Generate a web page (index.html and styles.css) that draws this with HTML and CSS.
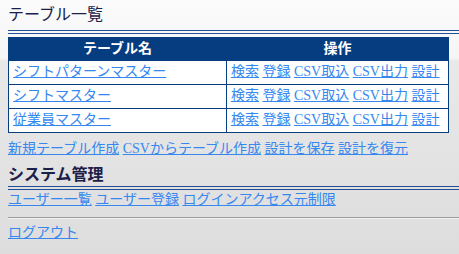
FILE: index.html
```html
<!DOCTYPE html>
<html lang="ja">
<head>
<meta charset="utf-8">
<title>テーブル一覧</title>
<link rel="stylesheet" href="styles.css">
</head>
<body>
<h2 class="title">テーブル一覧</h2>
<table class="tables">
  <thead>
    <tr><th class="col-name">テーブル名</th><th class="col-ops">操作</th></tr>
  </thead>
  <tbody>
    <tr>
      <td><a href="#">シフトパターンマスター</a></td>
      <td><a href="#">検索</a> <a href="#">登録</a> <a href="#">CSV取込</a> <a href="#">CSV出力</a> <a href="#">設計</a></td>
    </tr>
    <tr>
      <td><a href="#">シフトマスター</a></td>
      <td><a href="#">検索</a> <a href="#">登録</a> <a href="#">CSV取込</a> <a href="#">CSV出力</a> <a href="#">設計</a></td>
    </tr>
    <tr>
      <td><a href="#">従業員マスター</a></td>
      <td><a href="#">検索</a> <a href="#">登録</a> <a href="#">CSV取込</a> <a href="#">CSV出力</a> <a href="#">設計</a></td>
    </tr>
  </tbody>
</table>
<div class="links first-links"><a href="#">新規テーブル作成</a> <a href="#">CSVからテーブル作成</a> <a href="#">設計を保存</a> <a href="#">設計を復元</a></div>
<h3 class="title sub">システム管理</h3>
<div class="links"><a href="#">ユーザー一覧</a> <a href="#">ユーザー登録</a> <a href="#">ログインアクセス元制限</a></div>
<hr class="sep">
<div class="links"><a href="#">ログアウト</a></div>
</body>
</html>
```
FILE: styles.css
```css
html {
  min-height: 100%;
  background: linear-gradient(to bottom, #fbfbfb 0px, #f5f5f5 58px, #e9e9e9 61px, #dddddd 254px);
}
body {
  margin: 4px 0 0 8px;
  font-family: "Liberation Serif", "Noto Sans CJK JP", serif;
  font-size: 14px;
  line-height: 20px;
  color: #222;
}
a {
  color: #3688f0;
  text-decoration: underline;
}
.title {
  margin: 0;
  font-size: 16px;
  line-height: 22px;
  color: #1b2048;
  font-weight: normal;
  padding-bottom: 4px;
  border-bottom: 4px double #1f4e96;
}
.title.sub {
  font-weight: bold;
  margin-top: 5px;
  padding-bottom: 0;
}
.tables {
  margin-top: 3px;
  width: 441px;
  border-collapse: collapse;
  background: #fff;
  border: 1px solid #063c80;
}
.tables th {
  background: #063c80;
  color: #fff;
  font-weight: bold;
  line-height: 20px;
  padding: 1px 4px;
  text-align: center;
  border: 1px solid #063c80;
}
.tables .col-name { width: 209px; }
.tables td {
  line-height: 19px;
  padding: 1px 4px 3px;
  border: 1px solid #063c80;
  white-space: nowrap;
}
.links {
  margin: 0;
}
.first-links {
  margin-top: 6px;
}
.sep {
  border: 0;
  border-top: 1px solid #9c9c9c;
  border-bottom: 1px solid #f2f2f2;
  height: 0;
  margin: 7px 0 4px;
}
```
